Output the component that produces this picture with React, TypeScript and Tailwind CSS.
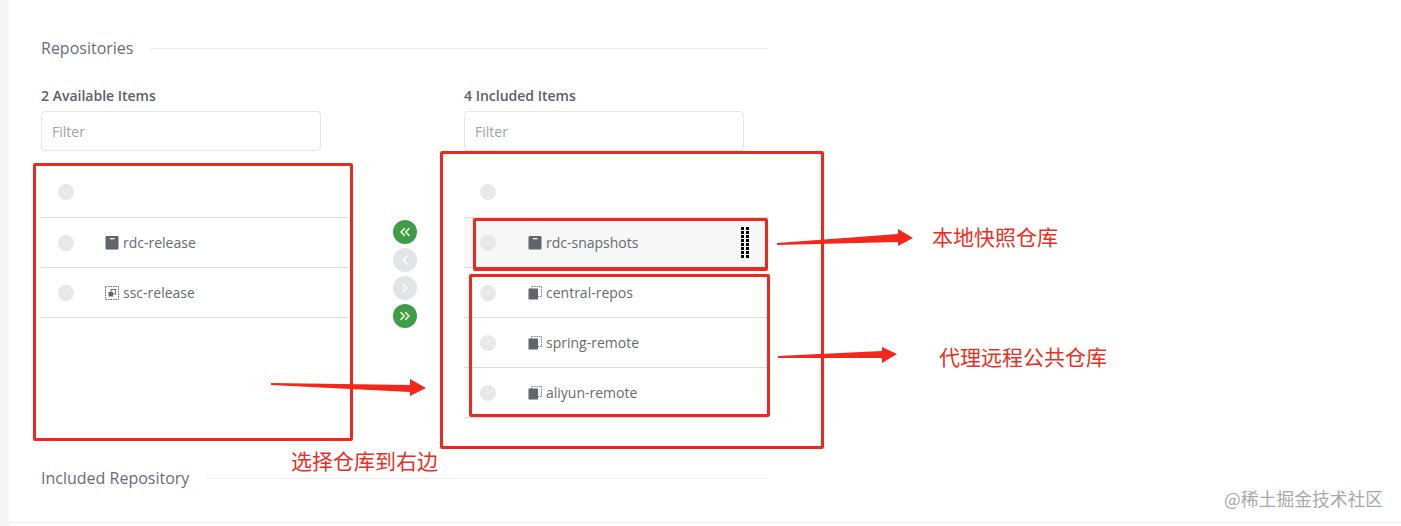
import React from 'react';
import { Check, ChevronLeft, ChevronRight, ChevronsLeft, ChevronsRight } from 'lucide-react';

const SANS = "font-['Open_Sans','Noto_Sans',sans-serif]";
const CJK = "font-['Noto_Sans_CJK_SC','Noto_Sans',sans-serif]";

type Kind = 'hosted' | 'proxy' | 'group';

const HostedIcon = () => (
  <svg width="14" height="14" viewBox="0 0 14 14" className="shrink-0">
    <rect x="0.5" y="0" width="13" height="13.5" rx="1" fill="#63656c" />
    <rect x="5" y="2" width="4.5" height="1.3" fill="#f4f4f4" />
  </svg>
);

const ProxyIcon = () => (
  <svg width="14" height="14" viewBox="0 0 14 14" className="shrink-0">
    <rect x="3.5" y="0.5" width="10" height="10" fill="none" stroke="#7a7c82" strokeWidth="1" strokeDasharray="1.5 1" />
    <rect x="0.5" y="2.5" width="9.5" height="11" rx="0.5" fill="#63656c" />
  </svg>
);

const GroupIcon = () => (
  <svg width="14" height="14" viewBox="0 0 14 14" className="shrink-0">
    <rect x="0.5" y="0.5" width="13" height="13" fill="none" stroke="#63656c" strokeWidth="1" strokeDasharray="1.5 1" />
    <rect x="6" y="3.5" width="4.5" height="4.5" fill="none" stroke="#63656c" strokeWidth="1" />
    <rect x="3.5" y="6" width="4.5" height="4.5" fill="#63656c" />
  </svg>
);

const RepoIcon = ({ kind }: { kind: Kind }) => {
  if (kind === 'hosted') return <HostedIcon />;
  if (kind === 'proxy') return <ProxyIcon />;
  return <GroupIcon />;
};

const Radio = () => (
  <span className="flex h-4 w-4 items-center justify-center rounded-full bg-[#e8e8e8]">
    <Check size={9} color="#f3f3f3" strokeWidth={2} />
  </span>
);

const DragHandle = () => (
  <span className="grid grid-cols-2 gap-x-[2px] gap-y-[1px]">
    {Array.from({ length: 16 }).map((_, i) => (
      <span key={i} className="h-[3px] w-[3px] bg-black" />
    ))}
  </span>
);

const Row = ({ name, kind, active, right }: { name?: string; kind?: Kind; active?: boolean; right?: boolean }) => (
  <div
    className={`flex items-center border-b border-[#dcdcdc] ${right ? 'pl-[16px]' : 'pl-[17px]'} ${name ? 'h-[50px]' : 'h-[52px]'} ${active ? 'bg-[#f7f7f7]' : ''}`}
  >
    <Radio />
    {name && kind && (
      <div className={`flex flex-1 items-center gap-[4px] ${right ? 'ml-[32px]' : 'ml-[31px]'}`}>
        <RepoIcon kind={kind} />
        <span className="text-[14px] leading-5 text-[#666a70]">{name}</span>
      </div>
    )}
    {active && (
      <span className="mr-[19px]">
        <DragHandle />
      </span>
    )}
  </div>
);

const Column = ({ title, children }: { title: string; children: React.ReactNode }) => (
  <div>
    <div className="h-[18px] text-[14px] font-semibold leading-[18px] text-[#5a5e6b]">{title}</div>
    <input
      placeholder="Filter"
      className="mt-[6px] block h-[40px] w-[280px] rounded border border-[#e6e6e6] bg-white px-[10px] text-[14px] outline-none placeholder:text-[#a3a3a3]"
    />
    <div className="mt-[15px]">{children}</div>
  </div>
);

const MoveButton = ({ on, children }: { on?: boolean; children: React.ReactNode }) => (
  <button
    className={`flex h-6 w-6 items-center justify-center rounded-full ${on ? 'bg-[#3f9c48] text-[#e3f5cf]' : 'bg-[#e2e4e6] text-white'}`}
  >
    {children}
  </button>
);

const SectionTitle = ({ children }: { children: React.ReactNode }) => (
  <div className="flex h-[22px] items-center gap-[17px]">
    <span className="text-[16px] leading-[22px] text-[#676c78]">{children}</span>
    <span className="h-px flex-1 bg-[#eeeeee]" />
  </div>
);

const Box = ({ className }: { className: string }) => (
  <div className={`absolute rounded-[2px] border-[3px] border-[#ea2a1f] ${className}`} />
);

const Note = ({ className, children }: { className: string; children: React.ReactNode }) => (
  <div className={`absolute whitespace-nowrap text-[21px] leading-7 text-[#e8301f] ${CJK} ${className}`}>{children}</div>
);

const Arrow = ({ className, width, height, points }: { className: string; width: number; height: number; points: string }) => (
  <svg className={`absolute ${className}`} width={width} height={height} viewBox={`0 0 ${width} ${height}`}>
    <polygon points={points} fill="#f5261b" />
  </svg>
);

export default function App() {
  return (
    <div className={`relative flex h-[526px] w-[1401px] overflow-hidden bg-white ${SANS}`}>
      <div className="w-[9px] shrink-0 bg-[#f5f5f5]" />
      <div className="h-[523px] flex-1 border-b border-[#eeeeee] pl-[32px] pt-[37px]">
        <div className="w-[727px]">
          <SectionTitle>Repositories</SectionTitle>
          <div className="mt-[28px] flex h-[352px] items-start">
            <div className="w-[307px]">
              <Column title="2 Available Items">
                <Row />
                <Row name="rdc-release" kind="hosted" />
                <Row name="ssc-release" kind="group" />
              </Column>
            </div>
            <div className="ml-[45px] mt-[133px] flex w-6 flex-col gap-1">
              <MoveButton on><ChevronsLeft size={16} strokeWidth={2.5} /></MoveButton>
              <MoveButton><ChevronLeft size={14} strokeWidth={2.5} /></MoveButton>
              <MoveButton><ChevronRight size={14} strokeWidth={2.5} /></MoveButton>
              <MoveButton on><ChevronsRight size={16} strokeWidth={2.5} /></MoveButton>
            </div>
            <div className="ml-[47px] w-[304px]">
              <Column title="4 Included Items">
                <Row right />
                <Row right name="rdc-snapshots" kind="hosted" active />
                <Row right name="central-repos" kind="proxy" />
                <Row right name="spring-remote" kind="proxy" />
                <Row right name="aliyun-remote" kind="proxy" />
              </Column>
            </div>
          </div>
          <div className="mt-[28px]">
            <SectionTitle>Included Repository</SectionTitle>
          </div>
        </div>
      </div>

      {/* hand drawn annotations on top of the screenshot */}
      <Box className="left-[33px] top-[163px] h-[278px] w-[320px]" />
      <Box className="left-[440px] top-[151px] h-[298px] w-[384px]" />
      <Box className="left-[473px] top-[218px] h-[53px] w-[295px] border-b-[4px]" />
      <Box className="left-[469px] top-[274px] h-[143px] w-[301px]" />

      <Arrow className="left-[777px] top-[229px]" width={137} height={18} points="0,14 121,5 121,0 136,9 121,17 121,13 0,16" />
      <Arrow className="left-[778px] top-[347px]" width={120} height={17} points="0,9 104,4 104,0 119,7 104,16 104,11 0,11" />
      <Arrow className="left-[271px] top-[379px]" width={156} height={18} points="0,4 139,6 139,0 155,9 139,17 139,13 0,6" />

      <Note className="left-[932px] top-[222px]">本地快照仓库</Note>
      <Note className="left-[939px] top-[342px]">代理远程公共仓库</Note>
      <Note className="left-[291px] top-[446px]">选择仓库到右边</Note>

      <div className={`absolute left-[1224px] top-[486px] whitespace-nowrap text-[17.8px] leading-6 text-[#a8a8a8] ${CJK}`}>@稀土掘金技术社区</div>
    </div>
  );
}
